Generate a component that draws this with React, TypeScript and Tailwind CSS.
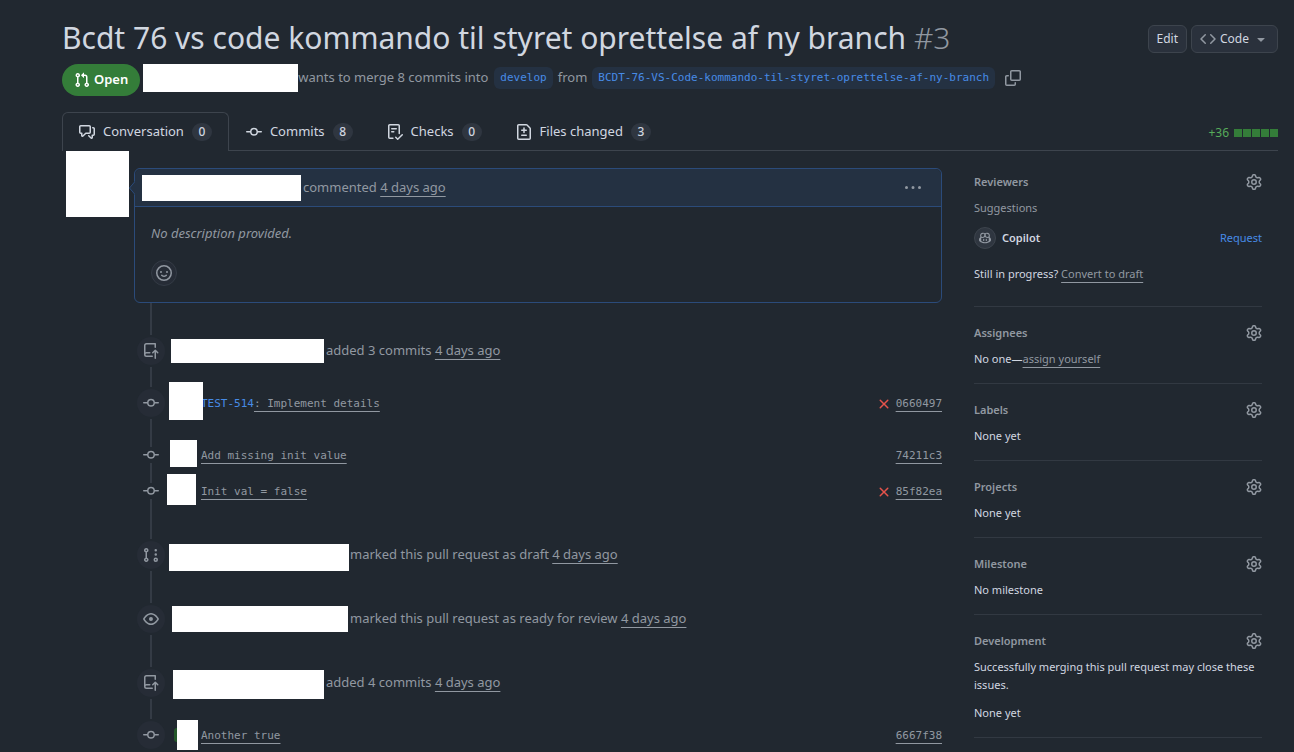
import type { ReactNode } from 'react';
import clsx from 'clsx';

const ICONS = {
  pullRequest:
    'M1.5 3.25a2.25 2.25 0 1 1 3 2.122v5.256a2.251 2.251 0 1 1-1.5 0V5.372A2.25 2.25 0 0 1 1.5 3.25Zm5.677-.177L9.573.677A.25.25 0 0 1 10 .854V2.5h1A2.5 2.5 0 0 1 13.5 5v5.628a2.251 2.251 0 1 1-1.5 0V5a1 1 0 0 0-1-1h-1v1.646a.25.25 0 0 1-.427.177L7.177 3.427a.25.25 0 0 1 0-.354ZM3.75 2.5a.75.75 0 1 0 0 1.5.75.75 0 0 0 0-1.5Zm0 9.5a.75.75 0 1 0 0 1.5.75.75 0 0 0 0-1.5Zm8.25.75a.75.75 0 1 0 1.5 0 .75.75 0 0 0-1.5 0Z',
  discussion:
    'M1.75 1h8.5c.966 0 1.75.784 1.75 1.75v5.5A1.75 1.75 0 0 1 10.25 10H7.061l-2.574 2.573A1.458 1.458 0 0 1 2 11.543V10h-.25A1.75 1.75 0 0 1 0 8.25v-5.5C0 1.784.784 1 1.75 1ZM1.5 2.75v5.5c0 .138.112.25.25.25h1a.75.75 0 0 1 .75.75v2.19l2.72-2.72a.749.749 0 0 1 .53-.22h3.5a.25.25 0 0 0 .25-.25v-5.5a.25.25 0 0 0-.25-.25h-8.5a.25.25 0 0 0-.25.25Zm13 2a.25.25 0 0 0-.25-.25h-.5a.75.75 0 0 1 0-1.5h.5c.966 0 1.75.784 1.75 1.75v5.5A1.75 1.75 0 0 1 14.25 12H14v1.543a1.458 1.458 0 0 1-2.487 1.03L9.22 12.28a.749.749 0 0 1 .326-1.275.749.749 0 0 1 .734.215l2.22 2.22v-2.19a.75.75 0 0 1 .75-.75h1a.25.25 0 0 0 .25-.25Z',
  commit:
    'M11.93 8.5a4.002 4.002 0 0 1-7.86 0H.75a.75.75 0 0 1 0-1.5h3.32a4.002 4.002 0 0 1 7.86 0h3.32a.75.75 0 0 1 0 1.5Zm-1.43-.75a2.5 2.5 0 1 0-5 0 2.5 2.5 0 0 0 5 0Z',
  checklist:
    'M2.5 1.75v11.5c0 .138.112.25.25.25h3.17a.75.75 0 0 1 0 1.5H2.75A1.75 1.75 0 0 1 1 13.25V1.75C1 .784 1.784 0 2.75 0h8.5C12.216 0 13 .784 13 1.75v7.736a.75.75 0 0 1-1.5 0V1.75a.25.25 0 0 0-.25-.25h-8.5a.25.25 0 0 0-.25.25Zm13.274 9.537v-.001l-4.557 4.45a.75.75 0 0 1-1.055-.008l-1.943-1.95a.75.75 0 0 1 1.062-1.058l1.419 1.425 4.026-3.932a.75.75 0 1 1 1.048 1.074ZM4.75 4h4.5a.75.75 0 0 1 0 1.5h-4.5a.75.75 0 0 1 0-1.5ZM4 7.75A.75.75 0 0 1 4.75 7h2a.75.75 0 0 1 0 1.5h-2A.75.75 0 0 1 4 7.75Z',
  fileDiff:
    'M1 1.75C1 .784 1.784 0 2.75 0h7.586c.464 0 .909.184 1.237.513l2.914 2.914c.329.328.513.773.513 1.237v9.586A1.75 1.75 0 0 1 13.25 16H2.75A1.75 1.75 0 0 1 1 14.25Zm1.75-.25a.25.25 0 0 0-.25.25v12.5c0 .138.112.25.25.25h10.5a.25.25 0 0 0 .25-.25V4.664a.25.25 0 0 0-.073-.177l-2.914-2.914a.25.25 0 0 0-.177-.073ZM8 3.25a.75.75 0 0 1 .75.75v1.5h1.5a.75.75 0 0 1 0 1.5h-1.5v1.5a.75.75 0 0 1-1.5 0V7h-1.5a.75.75 0 0 1 0-1.5h1.5V4A.75.75 0 0 1 8 3.25Zm-3 8a.75.75 0 0 1 .75-.75h4.5a.75.75 0 0 1 0 1.5h-4.5a.75.75 0 0 1-.75-.75Z',
  copy: 'M0 6.75C0 5.784.784 5 1.75 5h1.5a.75.75 0 0 1 0 1.5h-1.5a.25.25 0 0 0-.25.25v7.5c0 .138.112.25.25.25h7.5a.25.25 0 0 0 .25-.25v-1.5a.75.75 0 0 1 1.5 0v1.5A1.75 1.75 0 0 1 9.25 16h-7.5A1.75 1.75 0 0 1 0 14.25ZM5 1.75C5 .784 5.784 0 6.75 0h7.5C15.216 0 16 .784 16 1.75v7.5A1.75 1.75 0 0 1 14.25 11h-7.5A1.75 1.75 0 0 1 5 9.25Zm1.75-.25a.25.25 0 0 0-.25.25v7.5c0 .138.112.25.25.25h7.5a.25.25 0 0 0 .25-.25v-7.5a.25.25 0 0 0-.25-.25Z',
  gear: 'M8 0a8.2 8.2 0 0 1 .701.031C9.444.095 9.99.645 10.16 1.29l.288 1.107c.018.066.079.158.212.224.231.114.454.243.668.386.123.082.233.09.299.071l1.103-.303c.644-.176 1.392.021 1.82.63.27.385.506.792.704 1.218.315.675.111 1.422-.364 1.891l-.814.806c-.049.048-.098.147-.088.294.016.257.016.515 0 .772-.01.147.038.246.088.294l.814.806c.475.469.679 1.216.364 1.891a7.977 7.977 0 0 1-.704 1.217c-.428.61-1.176.807-1.82.63l-1.102-.302c-.067-.019-.177-.011-.3.071a5.909 5.909 0 0 1-.668.386c-.133.066-.194.158-.211.224l-.29 1.106c-.168.646-.715 1.196-1.458 1.26a8.006 8.006 0 0 1-1.402 0c-.743-.064-1.289-.614-1.458-1.26l-.289-1.106c-.018-.066-.079-.158-.212-.224a5.738 5.738 0 0 1-.668-.386c-.123-.082-.233-.09-.299-.071l-1.103.303c-.644.176-1.392-.021-1.82-.63a8.12 8.12 0 0 1-.704-1.218c-.315-.675-.111-1.422.363-1.891l.815-.806c.05-.048.098-.147.088-.294a6.214 6.214 0 0 1 0-.772c.01-.147-.038-.246-.088-.294l-.815-.806C.635 6.045.431 5.298.746 4.623a7.92 7.92 0 0 1 .704-1.217c.428-.61 1.176-.807 1.82-.63l1.102.302c.067.019.177.011.3-.071.214-.143.437-.272.668-.386.133-.066.194-.158.211-.224l.29-1.106C6.009.645 6.556.095 7.299.03 7.53.01 7.764 0 8 0Zm-.571 1.525c-.036.003-.108.036-.137.146l-.289 1.105c-.147.561-.549.967-.998 1.189-.173.086-.34.183-.5.29-.417.278-.97.423-1.529.27l-1.103-.303c-.109-.03-.175.016-.195.045-.22.312-.412.644-.573.99-.014.031-.021.11.059.19l.815.806c.411.406.562.957.53 1.456a4.709 4.709 0 0 0 0 .582c.032.499-.119 1.05-.53 1.456l-.815.806c-.081.08-.073.159-.059.19.162.346.353.677.573.989.02.03.085.076.195.046l1.102-.303c.56-.153 1.113-.008 1.53.27.161.107.328.204.501.29.447.222.85.629.997 1.189l.289 1.105c.029.109.101.143.137.146a6.6 6.6 0 0 0 1.142 0c.036-.003.108-.036.137-.146l.289-1.105c.147-.561.549-.967.998-1.189.173-.086.34-.183.5-.29.417-.278.97-.423 1.529-.27l1.103.303c.109.029.175-.016.195-.045.22-.313.411-.644.573-.99.014-.031.021-.11-.059-.19l-.815-.806c-.411-.406-.562-.957-.53-1.456a4.709 4.709 0 0 0 0-.582c-.032-.499.119-1.05.53-1.456l.815-.806c.081-.08.073-.159.059-.19a6.464 6.464 0 0 0-.573-.989c-.02-.03-.085-.076-.195-.046l-1.102.303c-.56.153-1.113.008-1.53-.27a4.44 4.44 0 0 0-.501-.29c-.447-.222-.85-.629-.997-1.189l-.289-1.105c-.029-.11-.101-.143-.137-.146a6.6 6.6 0 0 0-1.142 0ZM11 8a3 3 0 1 1-6 0 3 3 0 0 1 6 0ZM9.5 8a1.5 1.5 0 1 0-3.001.001A1.5 1.5 0 0 0 9.5 8Z',
  push: 'M1 2.5A2.5 2.5 0 0 1 3.5 0h8.75a.75.75 0 0 1 .75.75v3.5a.75.75 0 0 1-1.5 0V1.5h-8a1 1 0 0 0-1 1v6.708A2.493 2.493 0 0 1 3.5 9h3.25a.75.75 0 0 1 0 1.5H3.5a1 1 0 0 0 0 2h5.75a.75.75 0 0 1 0 1.5H3.5A2.5 2.5 0 0 1 1 11.5Zm13.23 7.79h-.001l-1.224-1.224v6.184a.75.75 0 0 1-1.5 0V9.066L10.28 10.29a.75.75 0 0 1-1.06-1.061l2.505-2.504a.75.75 0 0 1 1.06 0L15.29 9.23a.751.751 0 0 1-.018 1.042.751.751 0 0 1-1.042.018Z',
  draft:
    'M3.25 1A2.25 2.25 0 0 1 4 5.372v5.256a2.251 2.251 0 1 1-1.5 0V5.372A2.251 2.251 0 0 1 3.25 1Zm9.5 14a2.25 2.25 0 1 1 0-4.5 2.25 2.25 0 0 1 0 4.5ZM2.5 3.25a.75.75 0 1 0 1.5 0 .75.75 0 0 0-1.5 0ZM3.25 12a.75.75 0 1 0 0 1.5.75.75 0 0 0 0-1.5Zm9.5 0a.75.75 0 1 0 0 1.5.75.75 0 0 0 0-1.5ZM14 7.5a1.25 1.25 0 1 1-2.5 0 1.25 1.25 0 0 1 2.5 0Zm0-4.25a1.25 1.25 0 1 1-2.5 0 1.25 1.25 0 0 1 2.5 0Z',
  eye: 'M8 2c1.981 0 3.671.992 4.933 2.078 1.27 1.091 2.187 2.345 2.637 3.023a1.62 1.62 0 0 1 0 1.798c-.45.678-1.367 1.932-2.637 3.023C11.67 13.008 9.981 14 8 14c-1.981 0-3.671-.992-4.933-2.078C1.797 10.83.88 9.576.43 8.898a1.62 1.62 0 0 1 0-1.798c.45-.677 1.367-1.931 2.637-3.022C4.33 2.992 6.019 2 8 2ZM1.679 7.932a.12.12 0 0 0 0 .136c.411.622 1.241 1.75 2.366 2.717C5.176 11.758 6.527 12.5 8 12.5c1.473 0 2.825-.742 3.955-1.715 1.124-.967 1.954-2.096 2.366-2.717a.12.12 0 0 0 0-.136c-.412-.621-1.242-1.75-2.366-2.717C10.824 4.242 9.473 3.5 8 3.5c-1.473 0-2.825.742-3.955 1.715-1.124.967-1.954 2.096-2.366 2.717ZM8 10a2 2 0 1 1-.001-3.999A2 2 0 0 1 8 10Z',
  x: 'M3.72 3.72a.75.75 0 0 1 1.06 0L8 6.94l3.22-3.22a.749.749 0 0 1 1.275.326.749.749 0 0 1-.215.734L9.06 8l3.22 3.22a.749.749 0 0 1-.326 1.275.749.749 0 0 1-.734-.215L8 9.06l-3.22 3.22a.751.751 0 0 1-1.042-.018.751.751 0 0 1-.018-1.042L6.94 8 3.72 4.78a.75.75 0 0 1 0-1.06Z',
  code: 'm11.28 3.22 4.25 4.25a.75.75 0 0 1 0 1.06l-4.25 4.25a.749.749 0 0 1-1.275-.326.749.749 0 0 1 .215-.734L13.94 8l-3.72-3.72a.749.749 0 0 1 .326-1.275.749.749 0 0 1 .734.215Zm-6.56 0a.751.751 0 0 1 1.042.018.751.751 0 0 1 .018 1.042L2.06 8l3.72 3.72a.749.749 0 0 1-.326 1.275.749.749 0 0 1-.734-.215L.47 8.53a.75.75 0 0 1 0-1.06Z',
  triangle: 'm4.427 7.427 3.396 3.396a.25.25 0 0 0 .354 0l3.396-3.396A.25.25 0 0 0 11.396 7H4.604a.25.25 0 0 0-.177.427Z',
  kebab: 'M8 9a1.5 1.5 0 1 0 0-3 1.5 1.5 0 0 0 0 3ZM1.5 9a1.5 1.5 0 1 0 0-3 1.5 1.5 0 0 0 0 3Zm13 0a1.5 1.5 0 1 0 0-3 1.5 1.5 0 0 0 0 3Z',
  smiley:
    'M8 0a8 8 0 1 1 0 16A8 8 0 0 1 8 0ZM1.5 8a6.5 6.5 0 1 0 13 0 6.5 6.5 0 0 0-13 0Zm3.82 1.636a.75.75 0 0 1 1.038.175l.007.009c.103.118.22.222.35.31.264.178.683.37 1.285.37.602 0 1.02-.192 1.285-.371.13-.088.247-.192.35-.31l.007-.008a.75.75 0 0 1 1.222.87c-.06.085-.13.165-.199.234-.16.166-.338.316-.53.445-.63.418-1.37.638-2.127.629-.946 0-1.652-.308-2.126-.63a3.331 3.331 0 0 1-.729-.677.75.75 0 0 1 .176-1.046ZM12 7a1 1 0 1 1-2 0 1 1 0 0 1 2 0ZM5 8a1 1 0 1 1 0-2 1 1 0 0 1 0 2Z',
  copilot:
    'M7.998 15.035c-4.562 0-7.873-2.914-7.998-3.749V9.338c.085-.628.677-1.686 1.588-2.065.013-.07.024-.143.036-.218.029-.183.06-.384.126-.612-.201-.508-.254-1.084-.254-1.656 0-.87.128-1.769.693-2.484.579-.733 1.494-1.124 2.724-1.261 1.206-.134 2.262.034 2.944.765.05.053.096.108.139.165.044-.057.094-.112.143-.165.682-.731 1.738-.899 2.944-.765 1.23.137 2.145.528 2.724 1.261.566.715.693 1.614.693 2.484 0 .572-.053 1.148-.254 1.656.066.228.098.429.126.612.012.076.024.148.037.218.924.385 1.522 1.471 1.591 2.095v1.872c0 .766-3.351 3.795-8.002 3.795Zm0-1.485c2.28 0 4.584-1.11 5.002-1.433V7.862l-.023-.116c-.49.21-1.075.291-1.727.291-1.146 0-2.059-.327-2.71-.991A3.222 3.222 0 0 1 8 6.303a3.24 3.24 0 0 1-.544.743c-.65.664-1.563.991-2.71.991-.652 0-1.236-.081-1.727-.291l-.023.116v4.255c.419.323 2.722 1.433 5.002 1.433ZM6.762 2.83c-.193-.206-.637-.413-1.682-.297-1.019.113-1.479.404-1.713.7-.247.312-.369.789-.369 1.554 0 .793.129 1.171.308 1.371.162.181.519.379 1.442.379.853 0 1.339-.235 1.638-.54.315-.322.527-.827.617-1.553.117-.935-.037-1.395-.241-1.614Zm4.155-.297c-1.044-.116-1.488.091-1.681.297-.204.219-.359.679-.242 1.614.091.726.303 1.231.618 1.553.299.305.784.54 1.638.54.922 0 1.28-.198 1.442-.379.179-.2.308-.578.308-1.371 0-.765-.123-1.242-.37-1.554-.233-.296-.693-.587-1.713-.7ZM6.25 9.037a.75.75 0 0 1 .75.75v1.501a.75.75 0 0 1-1.5 0V9.787a.75.75 0 0 1 .75-.75Zm4.25.75v1.501a.75.75 0 0 1-1.5 0V9.787a.75.75 0 0 1 1.5 0Z',
};

type IconName = keyof typeof ICONS;

function Icon({ name, className = 'size-4' }: { name: IconName; className?: string }) {
  return (
    <svg viewBox="0 0 16 16" fill="currentColor" aria-hidden="true" className={clsx('shrink-0', className)}>
      <path d={ICONS[name]} />
    </svg>
  );
}

const MONO = "font-['DejaVu_Sans_Mono',monospace] text-[11px]";

/* Blanked-out user name or avatar */
function Redacted({ className }: { className: string }) {
  return <span className={clsx('block shrink-0 bg-white', className)} />;
}

function Ago() {
  return (
    <a href="#" className="underline underline-offset-4">
      4 days ago
    </a>
  );
}

function Branch({ children }: { children: ReactNode }) {
  return (
    <a href="#" className={clsx(MONO, 'h-[22px] rounded-md bg-[#243142] px-1.5 leading-[22px] text-[#478be6]')}>
      {children}
    </a>
  );
}

function Header() {
  return (
    <header>
      <div className="flex items-start justify-between pt-[18px]">
        <h1 className="text-[30px] leading-10 text-[#d1d7e0]">
          Bcdt 76 vs code kommando til styret oprettelse af ny branch{' '}
          <span className="font-light text-[#9198a1]">#3</span>
        </h1>
        <div className="mt-[7px] flex gap-1 text-xs text-[#d1d7e0]">
          <button className="h-7 rounded-md border border-[#3d444d] bg-[#2a313c] px-2">Edit</button>
          <button className="flex h-7 items-center gap-1 rounded-md border border-[#3d444d] bg-[#2a313c] px-2">
            <Icon name="code" className="size-4 text-[#9198a1]" />
            Code
            <Icon name="triangle" className="size-4 text-[#9198a1]" />
          </button>
        </div>
      </div>
      <div className="mt-1.5 flex items-start text-[13px] text-[#9198a1]">
        <span className="flex h-8 items-center gap-1 rounded-full bg-[#347d39] px-3 font-semibold text-white">
          <Icon name="pullRequest" />
          Open
        </span>
        <div className="flex h-7 items-center">
          <Redacted className="ml-[3px] h-7 w-[155px]" />
          <span className="mr-1.5">wants to merge 8 commits into</span>
          <Branch>develop</Branch>
          <span className="mx-[5px]">from</span>
          <Branch>BCDT-76-VS-Code-kommando-til-styret-oprettelse-af-ny-branch</Branch>
          <button aria-label="Copy branch name" className="ml-2.5">
            <Icon name="copy" />
          </button>
        </div>
      </div>
    </header>
  );
}

const TABS: { icon: IconName; label: string; count: number }[] = [
  { icon: 'discussion', label: 'Conversation', count: 0 },
  { icon: 'commit', label: 'Commits', count: 8 },
  { icon: 'checklist', label: 'Checks', count: 0 },
  { icon: 'fileDiff', label: 'Files changed', count: 3 },
];

function Tabs() {
  return (
    <nav className="mt-4 flex h-[39px] items-stretch border-b border-[#3d444d] text-[13px] text-[#d1d7e0]">
      {TABS.map((tab, i) => (
        <a
          key={tab.label}
          href="#"
          className={clsx(
            'flex items-center gap-2 border border-b-0 px-4',
            i === 0 ? '-mb-px rounded-t-md border-[#3d444d] bg-[#212830] pb-px' : 'border-transparent',
          )}
        >
          <Icon name={tab.icon} />
          {tab.label}
          <span className="h-[18px] w-5 rounded-full bg-[#2f3640] text-center text-xs leading-[18px] font-medium">
            {tab.count}
          </span>
        </a>
      ))}
      <div className="ml-auto flex items-center gap-[5px] pt-1 text-xs text-[#57ab5a]">
        +36
        <span className="flex gap-px">
          {[0, 1, 2, 3, 4].map((n) => (
            <span key={n} className="size-2 bg-[#347d39]" />
          ))}
        </span>
      </div>
    </nav>
  );
}

function Comment() {
  return (
    <div className="flex items-start gap-[5px] pl-1">
      <Redacted className="h-[66px] w-[63px]" />
      <article className="relative mt-[17px] flex-1 rounded-md border border-[#2b4b7a]">
        <svg viewBox="0 0 6 14" className="absolute top-3 -left-1.5 h-3.5 w-1.5">
          <path d="M6 0 0 7l6 7Z" fill="#243142" />
          <path d="M6 .5.5 7 6 13.5" fill="none" stroke="#2b4b7a" />
        </svg>
        <div className="flex h-[38px] items-center rounded-t-md border-b border-[#2b4b7a] bg-[#243142] pr-5 pl-[7px] text-[13px] text-[#9198a1]">
          <Redacted className="h-[26px] w-[159px]" />
          <span className="ml-0.5 flex-1">
            commented <Ago />
          </span>
          <button aria-label="Show options">
            <Icon name="kebab" />
          </button>
        </div>
        <div className="px-4 pt-4 pb-4">
          <p className="text-[13px] leading-[21px] text-[#9198a1] italic">No description provided.</p>
          <button
            aria-label="Add your reaction"
            className="mt-4 flex size-[26px] items-center justify-center rounded-full border border-[#343b45] bg-[#262c36] text-[#9198a1]"
          >
            <Icon name="smiley" />
          </button>
        </div>
      </article>
    </div>
  );
}

type RowProps = {
  icon: IconName;
  line: string;
  compact?: boolean;
  children: ReactNode;
};

/* A stretch of the vertical rule, then the badge with its content */
function Row({ icon, line, compact, children }: RowProps) {
  return (
    <li>
      <div className="flex w-8 justify-center">
        <span className={clsx('w-0.5 bg-[#343b45]', line)} />
      </div>
      <div className={clsx('flex items-center', compact ? 'h-4' : 'h-8')}>
        <span className="flex w-8 shrink-0 justify-center text-[#9198a1]">
          {compact ? (
            <Icon name={icon} />
          ) : (
            <span className="flex size-7 items-center justify-center rounded-full bg-[#262c36]">
              <Icon name={icon} />
            </span>
          )}
        </span>
        {children}
      </div>
    </li>
  );
}

function EventText({ children }: { children: ReactNode }) {
  return (
    <p className="text-[13px] text-[#9198a1]">
      {children} <Ago />
    </p>
  );
}

function CommitText({ issue, message, hash, failed }: { issue?: string; message: string; hash: string; failed?: boolean }) {
  return (
    <div className={clsx(MONO, 'flex flex-1 items-center justify-between pt-0.5 text-[#9198a1]')}>
      <span>
        {issue && (
          <a href="#" className="text-[#478be6]">
            {issue}
          </a>
        )}
        <a href="#" className="underline underline-offset-4">
          {message}
        </a>
      </span>
      <span className="flex items-center gap-1">
        {failed && <Icon name="x" className="size-4 text-[#e5534b]" />}
        <a href="#" className="underline underline-offset-4">
          {hash}
        </a>
      </span>
    </div>
  );
}

function Timeline() {
  return (
    <ul className="pl-[73px]">
      <Row icon="push" line="h-8">
        <Redacted className="mr-0.5 ml-1 h-6 w-[153px]" />
        <EventText>added 3 commits</EventText>
      </Row>
      <Row icon="commit" line="h-5">
        <Redacted className="relative -mr-0.5 mb-1 ml-0.5 h-[38px] w-[34px]" />
        <CommitText issue="TEST-514" message=": Implement details" hash="0660497" failed />
      </Row>
      <Row icon="commit" line="h-7" compact>
        <Redacted className="mr-1 mb-1 ml-[3px] h-[27px] w-[27px]" />
        <CommitText message="Add missing init value" hash="74211c3" />
      </Row>
      <Row icon="commit" line="h-5" compact>
        <Redacted className="mr-[5px] mb-1 h-[31px] w-[29px]" />
        <CommitText message="Init val = false" hash="85f82ea" failed />
      </Row>
      <Row icon="draft" line="h-10">
        <Redacted className="mr-px ml-0.5 h-[27px] w-[180px] self-end" />
        <EventText>marked this pull request as draft</EventText>
      </Row>
      <Row icon="eye" line="h-8">
        <Redacted className="mr-0.5 ml-[5px] h-[26px] w-[176px]" />
        <EventText>marked this pull request as ready for review</EventText>
      </Row>
      <Row icon="push" line="h-8">
        <Redacted className="mr-0.5 ml-1.5 h-[29px] w-[151px] self-end" />
        <EventText>added 4 commits</EventText>
      </Row>
      <Row icon="commit" line="h-5">
        <span className="ml-[7px] h-3.5 w-[3px] rounded-l-full bg-[#24582a]" />
        <Redacted className="mr-[3px] h-[30px] w-[21px]" />
        <CommitText message="Another true" hash="6667f38" />
      </Row>
    </ul>
  );
}

function Section({ title, children }: { title: string; children: ReactNode }) {
  return (
    <section className="border-b border-[#323942] pt-[17px] pb-[15px]">
      <div className="mb-2 flex items-center justify-between text-[#9198a1]">
        <h2 className="font-semibold">{title}</h2>
        <button aria-label={`Edit ${title}`}>
          <Icon name="gear" />
        </button>
      </div>
      {children}
    </section>
  );
}

function Sidebar() {
  return (
    <aside className="mr-4 w-72 shrink-0 pt-[5px] text-[11px] leading-[18px] text-[#d1d7e0]">
      <Section title="Reviewers">
        <p className="text-[#9198a1]">Suggestions</p>
        <div className="mt-2.5 flex h-[22px] items-center">
          <span className="flex size-[22px] items-center justify-center rounded-full border border-[#3d444d] bg-[#2f3640] text-[#9198a1]">
            <Icon name="copilot" className="size-3" />
          </span>
          <a href="#" className="ml-1.5 font-semibold">
            Copilot
          </a>
          <button className="ml-auto text-[#478be6]">Request</button>
        </div>
        <p className="mt-4 mb-2">
          Still in progress?{' '}
          <a href="#" className="text-[#9198a1] underline underline-offset-4">
            Convert to draft
          </a>
        </p>
      </Section>
      <Section title="Assignees">
        <p>
          No one—
          <button className="text-[#9198a1] underline underline-offset-4">assign yourself</button>
        </p>
      </Section>
      <Section title="Labels">
        <p>None yet</p>
      </Section>
      <Section title="Projects">
        <p>None yet</p>
      </Section>
      <Section title="Milestone">
        <p>No milestone</p>
      </Section>
      <Section title="Development">
        <p>Successfully merging this pull request may close these issues.</p>
        <p className="mt-2.5">None yet</p>
      </Section>
    </aside>
  );
}

export default function App() {
  return (
    <div className="min-h-screen bg-[#212830] pr-4 pl-[62px] font-['Noto_Sans',sans-serif]">
      <Header />
      <Tabs />
      <div className="flex items-start gap-8">
        <main className="min-w-0 flex-1">
          <Comment />
          <Timeline />
        </main>
        <Sidebar />
      </div>
    </div>
  );
}
